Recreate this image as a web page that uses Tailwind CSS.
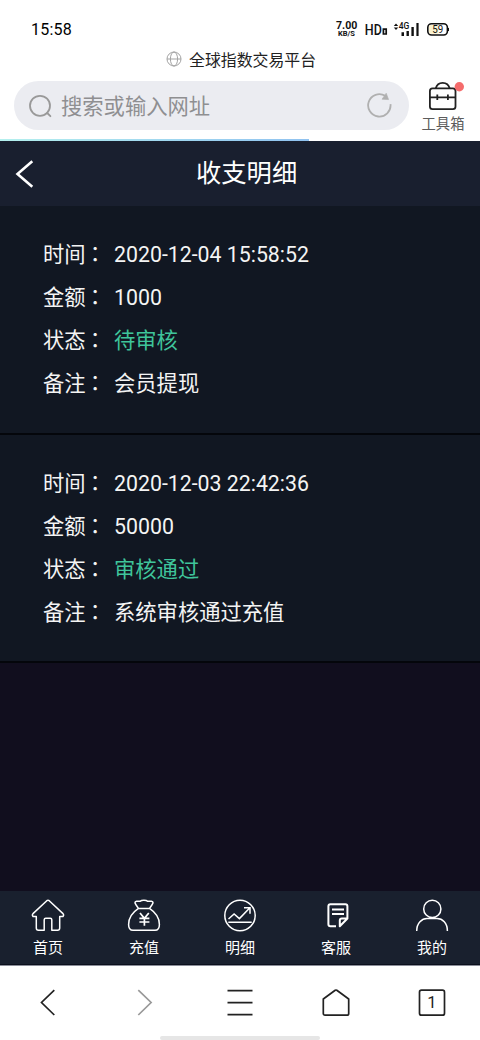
<!DOCTYPE html>
<html lang="zh-CN">
<head>
<meta charset="utf-8">
<meta name="viewport" content="width=device-width, initial-scale=1">
<title>收支明细</title>
<script src="https://cdn.jsdelivr.net/npm/@tailwindcss/browser@4"></script>
</head>
<body class="bg-white">
<div class="w-[480px] h-[1040px] flex flex-col overflow-hidden font-['Roboto','Noto_Sans_CJK_SC',sans-serif]">

  <!-- Status bar -->
  <div class="h-[47px] shrink-0 flex items-start justify-between pl-[31px] pr-[31px] text-black">
    <span class="mt-[18px] text-[16px] leading-[24px] tracking-[0.2px]">15:58</span>
    <div class="flex mt-[16px]">
      <div class="w-[28px] pt-[5px] pl-[1px] flex flex-col font-bold text-[#111]">
        <span class="text-[10.600px] leading-[9px] h-[9px]">7.00</span>
        <span class="text-[7.500px] leading-[8px] h-[8px] pl-[2px]">KB/S</span>
      </div>
      <svg class="w-[86px] h-[26px]" viewBox="363 16 86 26" font-family="Roboto, sans-serif" fill="#111">
        <text x="364.800" y="35" font-size="15" font-weight="500" textLength="17" lengthAdjust="spacingAndGlyphs">HD</text>
        <path d="M383.400 34v-4.800h2.800v4.800z" fill="none" stroke="#111" stroke-width="1.700"/>
        <path d="M393.800 26l2.200-2.400 2.200 2.400zM393.800 27.600l2.200 2.400 2.200-2.400z"/>
        <text x="398.800" y="29.300" font-size="9" font-weight="500" textLength="10.600" lengthAdjust="spacingAndGlyphs">4G</text>
        <path d="M401.500 32.200h2.500v3.800h-2.500zM406.500 31h2.400v5h-2.400zM411.400 27h2.400v9h-2.400zM416.400 23h2.200v13h-2.200z"/>
        <rect x="427.800" y="23.800" width="19.600" height="11.200" rx="3.800" fill="#fff" stroke="#111" stroke-width="1.600"/>
        <path d="M431 25h7.500v8.800H431a2 2 0 0 1-2-2v-4.800a2 2 0 0 1 2-2z" fill="#fbf1cc"/>
        <path d="M448.500 28v3" stroke="#111" stroke-width="1.200"/>
        <text x="432.200" y="33" font-size="10" textLength="11" lengthAdjust="spacingAndGlyphs">59</text>
      </svg>
    </div>
  </div>

  <!-- Page title -->
  <div class="h-[26px] shrink-0 flex items-center pl-[166px] gap-[7px]">
    <svg class="w-[16px] h-[16px] -mt-[2px]" viewBox="0 0 16 16" fill="none" stroke="#a3a3a3" stroke-width="1">
      <circle cx="8" cy="8" r="7"/><ellipse cx="8" cy="8" rx="3.6" ry="7"/><path d="M1 8h14"/>
    </svg>
    <span class="text-[15.9px] leading-[24px] mt-[2px] text-[#222]">全球指数交易平台</span>
  </div>

  <!-- Address bar -->
  <div class="h-[66px] shrink-0 flex pt-[8px] pl-[14px]">
    <div class="w-[395px] h-[49px] rounded-full bg-[#ebecf1] flex items-center pl-[15px] pr-[17px]">
      <svg class="w-[23px] h-[24px]" viewBox="0 0 23 24" fill="none" stroke="#999" stroke-width="1.8" stroke-linecap="round">
        <circle cx="11" cy="11.8" r="10"/><path d="M18.2 19l3.2 3.2"/>
      </svg>
      <span class="ml-[9px] mt-[3px] text-[21.3px] leading-[32px] text-[#8f8f91]">搜索或输入网址</span>
      <svg class="ml-auto -mt-[2px] w-[25px] h-[26px]" viewBox="0 0 25 26" fill="none">
        <path d="M23.5 12.200A11.200 11.200 0 1 1 18.200 3.800" stroke="#b0b0b0" stroke-width="1.800"/>
        <path d="M19.200 1.200l2.400 6.400-6.600-.400z" fill="#b0b0b0" stroke="#b0b0b0" stroke-width=".6"/>
      </svg>
    </div>
    <div class="w-[68px] flex flex-col items-center">
      <svg class="w-[42px] h-[30px]" viewBox="422 81 42 30" fill="none" stroke="#222" stroke-width="1.8">
        <rect x="429.900" y="88.400" width="25.600" height="20.800" rx="2.600"/>
        <path d="M435.800 88.200c.8-3.200 3.400-5.400 6.900-5.400s6.100 2.200 6.900 5.400M430 97.300h25.500M437.300 94.600v5.400M447.900 94.600v5.400"/>
        <circle cx="459.300" cy="86.800" r="4.700" fill="#f56c6c" stroke="none"/>
      </svg>
      <span class="text-[14.3px] leading-[22px] text-[#5c5c5c] mt-[2px]">工具箱</span>
    </div>
  </div>
  <div class="h-[2px] shrink-0"><div class="w-[309px] h-full bg-linear-to-r from-[#b4f0ee] to-[#90c2f0]"></div></div>

  <!-- Web page -->
  <header class="h-[65px] shrink-0 bg-[#191f2f] flex items-center text-white">
    <svg class="ml-[15px] w-[20px] h-[30px]" viewBox="0 0 20 30" fill="none" stroke="#fff" stroke-width="2.6"><path d="M17.300 2.200L2.500 15l14.800 12.800"/></svg>
    <h1 class="ml-[161px] text-[25.3px] leading-[38px] mt-px">收支明细</h1>
  </header>

  <main class="flex-1 bg-[#110e1e] text-[21.3px] leading-[42.700px] text-[#f4f4f4]">
    <section class="h-[229px] bg-[#111722] border-b-2 border-[#04060b] pt-[26px] pl-[43px]">
      <div class="flex items-baseline h-[42.7px]"><span>时间</span><span class="w-[29px] -ml-px mr-[.4px] font-['Noto_Sans_CJK_TC',sans-serif]" lang="zh-TW">：</span><span>2020-12-04 15:58:52</span></div>
      <div class="flex items-baseline h-[43.7px]"><span>金额</span><span class="w-[29px] -ml-px mr-[.4px] font-['Noto_Sans_CJK_TC',sans-serif]" lang="zh-TW">：</span><span>1000</span></div>
      <div class="flex items-baseline h-[42.7px]"><span>状态</span><span class="w-[29px] -ml-px mr-[.4px] font-['Noto_Sans_CJK_TC',sans-serif]" lang="zh-TW">：</span><span class="text-[#3fc59b]">待审核</span></div>
      <div class="flex items-baseline h-[42.7px]"><span>备注</span><span class="w-[29px] -ml-px mr-[.4px] font-['Noto_Sans_CJK_TC',sans-serif]" lang="zh-TW">：</span><span>会员提现</span></div>
    </section>
    <section class="h-[228px] bg-[#111722] border-b-2 border-[#04060b] pt-[26px] pl-[43px]">
      <div class="flex items-baseline h-[42.7px]"><span>时间</span><span class="w-[29px] -ml-px mr-[.4px] font-['Noto_Sans_CJK_TC',sans-serif]" lang="zh-TW">：</span><span>2020-12-03 22:42:36</span></div>
      <div class="flex items-baseline h-[43.7px]"><span>金额</span><span class="w-[29px] -ml-px mr-[.4px] font-['Noto_Sans_CJK_TC',sans-serif]" lang="zh-TW">：</span><span>50000</span></div>
      <div class="flex items-baseline h-[42.7px]"><span>状态</span><span class="w-[29px] -ml-px mr-[.4px] font-['Noto_Sans_CJK_TC',sans-serif]" lang="zh-TW">：</span><span class="text-[#3fc59b]">审核通过</span></div>
      <div class="flex items-baseline h-[42.7px]"><span>备注</span><span class="w-[29px] -ml-px mr-[.4px] font-['Noto_Sans_CJK_TC',sans-serif]" lang="zh-TW">：</span><span>系统审核通过充值</span></div>
    </section>
  </main>

  <!-- Site tabs -->
  <nav class="h-[74px] shrink-0 bg-[#19202e] border-b border-[#0b0f1c] grid grid-cols-5 pt-[8px] text-[15px] leading-[22px] text-white">
    <div class="flex flex-col items-center gap-[4px]">
      <svg class="w-[34px] h-[34px]" viewBox="0 0 34 34" fill="none" stroke="#fff" stroke-width="1.500" stroke-linejoin="round"><path d="M15.800 1.700Q17 .8 18.200 1.700L32 14.600Q33.200 16.200 32 17.400H28.700V29Q28.700 31.300 26.500 31.300H20.800V20.800Q20.800 19.200 19.300 19.200H14.700Q13.200 19.200 13.200 20.800V31.300H7.500Q5.300 31.300 5.300 29V17.400H2Q.8 16.200 2 14.600Z"/></svg>
      <span>首页</span>
    </div>
    <div class="flex flex-col items-center gap-[4px]">
      <svg class="w-[34px] h-[34px]" viewBox="0 0 34 34" fill="none" stroke="#fff" stroke-width="1.500" stroke-linejoin="round"><path d="M11.500 9.400C9.600 6.900 8 5.100 8 3.600 8 2 10.500 2.100 13 2.300 14.600 1 19 .8 20.800 2.300 23.500 2.100 26 2 26 3.600 26 5.100 24.400 6.900 22.500 9.400 27.500 12.700 32.400 18.500 32.400 25.500 32.400 30 30.800 31.300 28 31.300H6C3.200 31.300 1.600 30 1.600 25.500 1.600 18.500 6.500 12.700 11.500 9.400ZM11.500 9.400H22.500"/><path d="M13 14l4.400 5.400 4.400-5.400M12.400 19.400h10M12.400 23h10M17.400 19.400v7.400" stroke-width="1.700"/></svg>
      <span>充值</span>
    </div>
    <div class="flex flex-col items-center gap-[4px]">
      <svg class="w-[34px] h-[34px]" viewBox="0 0 34 34" fill="none" stroke="#fff" stroke-width="1.500"><circle cx="17" cy="16.500" r="15.200"/><path d="M5.500 20l5.600-5 5.300 4.600 10-10.400M21 8.700h6v6M5.300 23.200h23.400"/></svg>
      <span>明细</span>
    </div>
    <div class="flex flex-col items-center gap-[4px]">
      <svg class="w-[34px] h-[34px]" viewBox="0 0 34 34" fill="none" stroke="#fff" stroke-width="2" stroke-linejoin="round"><path d="M17 27.300H11.400Q9.400 27.300 9.400 25.300V7.300Q9.400 5.300 11.400 5.300H26.400Q28.400 5.300 28.400 7.300V19.500L20.800 27.300V21.500Q20.800 19.500 22.800 19.500H28.400M13 10.600h12M13 15h12"/></svg>
      <span>客服</span>
    </div>
    <div class="flex flex-col items-center gap-[4px]">
      <svg class="w-[34px] h-[34px]" viewBox="0 0 34 34" fill="none" stroke="#fff" stroke-width="1.500"><circle cx="17.300" cy="9.900" r="8.600"/><path d="M1.700 32C1.700 24 7 19.600 12 19.600H22C27.500 19.600 32.400 24 32.400 32"/></svg>
      <span>我的</span>
    </div>
  </nav>

  <!-- Browser toolbar -->
  <footer class="h-[75px] shrink-0 bg-white border-t border-[#8b8e99] flex flex-col">
    <div class="h-[70px] grid grid-cols-5 justify-items-center pt-[20px]">
      <svg class="w-[34px] h-[34px]" viewBox="0 0 34 34" fill="none" stroke="#222" stroke-width="1.700"><path d="M23.300 4.200L10.500 16.500l12.800 12.500"/></svg>
      <svg class="w-[34px] h-[34px]" viewBox="0 0 34 34" fill="none" stroke="#999" stroke-width="1.700"><path d="M11.300 4.200l12.800 12.300L11.300 29"/></svg>
      <svg class="w-[34px] h-[34px]" viewBox="0 0 34 34" fill="none" stroke="#222" stroke-width="1.700"><path d="M4.500 4.700h25M4.500 16.700h25M4.500 28.700h25"/></svg>
      <svg class="w-[34px] h-[34px]" viewBox="0 0 34 34" fill="none" stroke="#222" stroke-width="1.700" stroke-linejoin="round"><path d="M16.200 4.300Q17 3.700 17.800 4.300L29.700 13V27.400Q29.700 29.200 27.900 29.200H6.100Q4.300 29.200 4.300 27.400V13Z"/></svg>
      <svg class="w-[34px] h-[34px]" viewBox="0 0 34 34" fill="none" stroke="#222" stroke-width="1.700"><rect x="4.500" y="4.200" width="25" height="25" rx="2"/><text x="16.800" y="22" text-anchor="middle" font-size="16.500" font-family="Roboto, sans-serif" fill="#222" stroke="none">1</text></svg>
    </div>
    <div class="self-center w-[160px] h-[4px] rounded-full bg-[#e6e6e6]"></div>
  </footer>
</div>
</body>
</html>
